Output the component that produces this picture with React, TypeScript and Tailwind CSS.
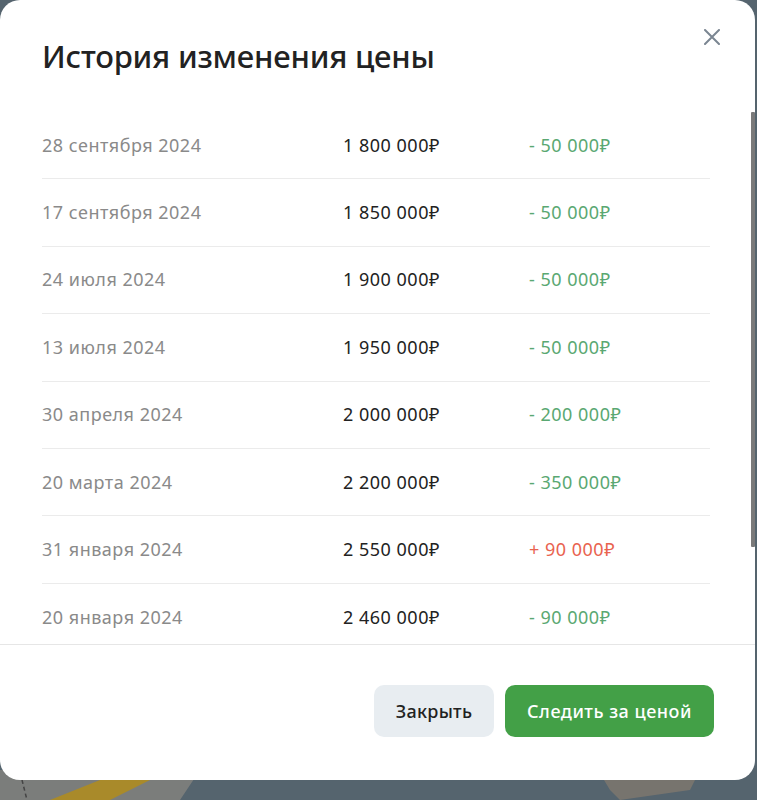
import React from "react";

const rows: { date: string; price: string; change: string; up?: boolean }[] = [
  { date: "28 сентября 2024", price: "1 800 000₽", change: "- 50 000₽" },
  { date: "17 сентября 2024", price: "1 850 000₽", change: "- 50 000₽" },
  { date: "24 июля 2024", price: "1 900 000₽", change: "- 50 000₽" },
  { date: "13 июля 2024", price: "1 950 000₽", change: "- 50 000₽" },
  { date: "30 апреля 2024", price: "2 000 000₽", change: "- 200 000₽" },
  { date: "20 марта 2024", price: "2 200 000₽", change: "- 350 000₽" },
  { date: "31 января 2024", price: "2 550 000₽", change: "+ 90 000₽", up: true },
  { date: "20 января 2024", price: "2 460 000₽", change: "- 90 000₽" },
];

export default function App() {
  return (
    <div
      className="relative w-[757px] h-[800px] overflow-hidden bg-[#55646e]"
      style={{ fontFamily: '"Noto Sans", "Open Sans", sans-serif' }}
    >
      <svg className="absolute inset-0" width="757" height="800" viewBox="0 0 757 800">
        <rect x="0" y="0" width="757" height="800" fill="#55646e" />
        <polygon points="0,770 0,800 180,800 200,770" fill="#7b7d7b" />
        <polygon points="50,800 100,780 150,780 110,800" fill="#a98a2a" />
        <line x1="22" y1="780" x2="27" y2="800" stroke="#444" strokeWidth="1.5" strokeDasharray="4 3" />
        <polygon points="598,770 700,770 690,790 620,800 610,790" fill="#77746e" />
      </svg>

      <div className="relative w-[755px] h-[780px] bg-white rounded-[20px] flex flex-col overflow-hidden">
        {/* header */}
        <div className="h-[112px] shrink-0 flex items-start justify-between pl-[42px] pr-[35px]">
          <h1 className="mt-[36px] text-[31px] leading-[40px] font-medium text-[#222222] tracking-[-0.2px]">
            История изменения цены
          </h1>
          <button className="mt-[29px] w-[16px] h-[16px] flex items-center justify-center">
            <svg width="16" height="16" viewBox="0 0 16 16">
              <path d="M1 1 L15 15 M15 1 L1 15" stroke="#7b8692" strokeWidth="2" strokeLinecap="round" />
            </svg>
          </button>
        </div>

        {/* list */}
        <div className="relative h-[533px] shrink-0 border-b border-[#e6e6e6]">
          <div className="h-full overflow-hidden pl-[42px] pr-[45px]">
            {rows.map((r, i) => (
              <div
                key={i}
                className={`grid grid-cols-[301px_186px_1fr] items-center h-[67.4px] text-[18px] tracking-[0.5px] ${
                  i < rows.length - 1 ? "border-b border-[#ebebeb]" : ""
                }`}
              >
                <span className="text-[#8a8a8a]">{r.date}</span>
                <span className="text-[#222222]">{r.price}</span>
                <span className={r.up ? "text-[#e9634f]" : "text-[#5aa872]"}>{r.change}</span>
              </div>
            ))}
          </div>
          <div className="absolute right-0 top-0 w-[4px] h-[435px] bg-[#7a7a7a] rounded-[1px]" />
        </div>

        {/* footer */}
        <div className="flex-1 flex justify-end items-start gap-[11px] pt-[40px] pr-[41px]">
          <button className="h-[52px] w-[120px] rounded-[10px] bg-[#e8edf1] text-[18px] tracking-[0.3px] font-medium text-[#222222]">
            Закрыть
          </button>
          <button className="h-[52px] w-[209px] rounded-[10px] bg-[#43a047] text-[18px] tracking-[0.5px] font-medium text-white">
            Следить за ценой
          </button>
        </div>
      </div>
    </div>
  );
}
